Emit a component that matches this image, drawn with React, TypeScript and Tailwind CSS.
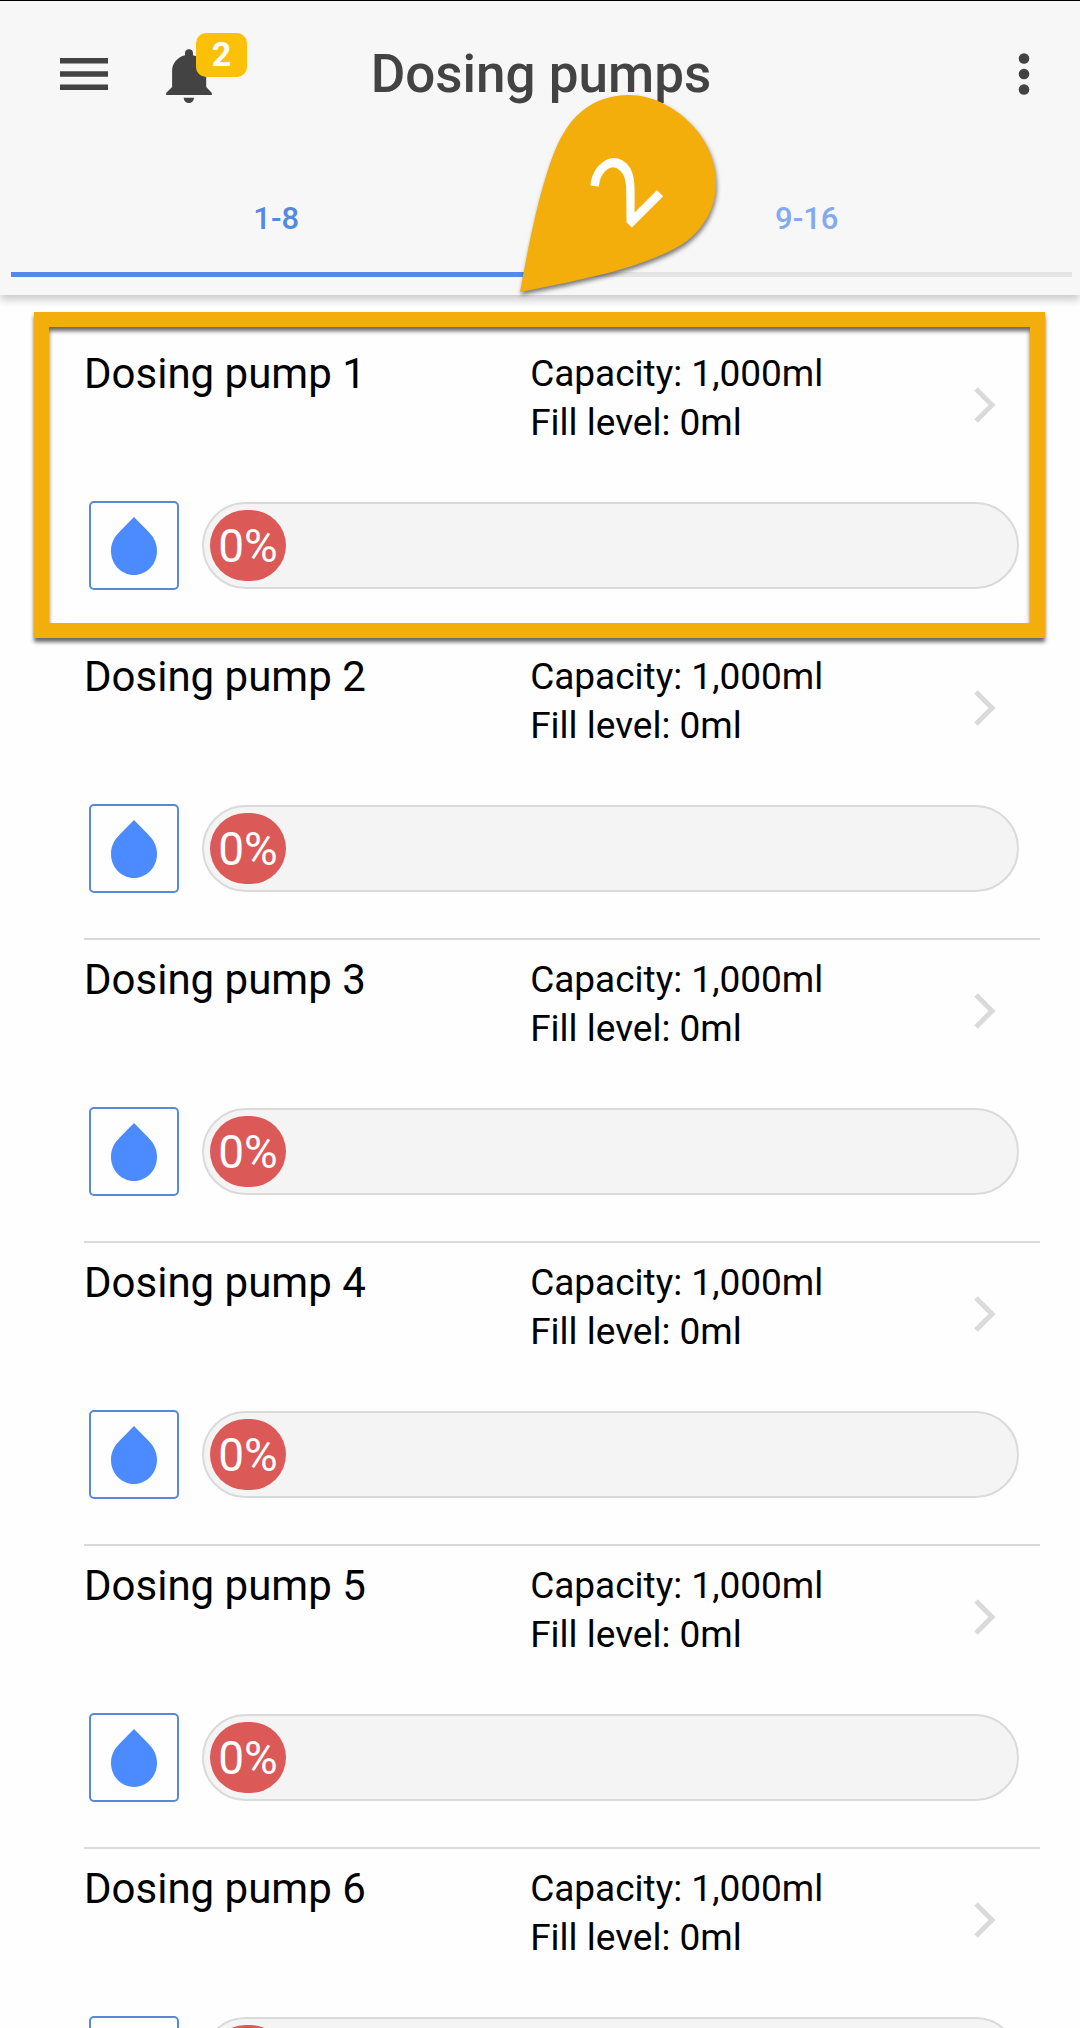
type Pump = {
    id: number;
    capacity: string;
    level: string;
    percent: number;
    highlighted?: boolean;
}

const pumps: Pump[] = [
    { id: 1, capacity: "1,000ml", level: "0ml", percent: 0, highlighted: true },
    { id: 2, capacity: "1,000ml", level: "0ml", percent: 0 },
    { id: 3, capacity: "1,000ml", level: "0ml", percent: 0 },
    { id: 4, capacity: "1,000ml", level: "0ml", percent: 0 },
    { id: 5, capacity: "1,000ml", level: "0ml", percent: 0 },
    { id: 6, capacity: "1,000ml", level: "0ml", percent: 0 },
]

const MenuIcon = () => (
    <svg width="48" height="32" viewBox="0 0 48 32" fill="#434343">
        <path d="M0 0h48v5.5H0zM0 13.2h48v5.5H0zM0 26.4h48v5.5H0z" />
    </svg>
)

const BellIcon = () => (
    <svg width="46" height="54" viewBox="498 146 138 163" fill="#434343">
        <path d="M498 285v-6l18-18v-50c0-22 17-41 39-46v-6a12 12 0 0 1 24 0v6c22 5 40 24 40 46v50l17 18v6z" />
        <path d="M551 293h31a15.5 16 0 0 1-31 0z" />
    </svg>
)

const MoreIcon = () => (
    <svg width="12" height="42" viewBox="0 0 12 42" fill="#434343">
        <circle cx="6" cy="5.5" r="5.3" />
        <circle cx="6" cy="21" r="5.3" />
        <circle cx="6" cy="36.5" r="5.3" />
    </svg>
)

const DropIcon = () => (
    <svg width="46" height="58" viewBox="0 0 138 174" fill="#4c8bff">
        <path d="M69 0l42 43c17 17 27 35 27 59 0 40-31 72-69 72S0 142 0 102c0-24 10-42 27-59z" />
    </svg>
)

const ChevronIcon = () => (
    <svg width="22" height="36" viewBox="0 0 22 36" fill="none" stroke="#dadada" strokeWidth="5">
        <path d="M2 2l16 16L2 34" />
    </svg>
)

// Callout pin that points at the tab bar
const StepPin = () => (
    <svg
        className="pointer-events-none absolute top-[85px] left-1/2 z-20 -ml-[30px] drop-shadow-[1px_3px_2px_rgba(0,0,0,0.5)]"
        width="216"
        height="216"
        viewBox="510 85 216 216"
    >
        <path
            fill="#f3ae0b"
            d="M520 292C529 243 537 204 547 173C556 144 566 124 582 111C596 100 611 95 629 95C652 95 676 107 694 127C709 144 716 163 716 184C716 208 703 230 684 243C668 254 638 265 608 273C580 280 550 286 520 292Z"
        />
        <text
            x="647"
            y="211"
            transform="rotate(-45 647 211)"
            textAnchor="middle"
            fill="#fff"
            stroke="#fff"
            strokeWidth="2"
            className="font-['Open_Sans',sans-serif] text-[90px]"
        >
            2
        </text>
    </svg>
)

const Header = () => {
    return (
        <header className="relative z-10 border-t border-black bg-[#f7f7f7] pb-[18px] shadow-[0_5px_8px_rgba(0,0,0,0.2)]">
            <div className="grid h-[146px] grid-cols-[1fr_auto_1fr] items-center pr-[50px] pl-[52px]">
                <div className="flex items-center gap-[50px]">
                    <button type="button" aria-label="Menu" className="px-2">
                        <MenuIcon />
                    </button>
                    <button type="button" aria-label="Notifications" className="relative pt-1">
                        <BellIcon />
                        <span className="absolute -top-3 left-[30px] h-11 w-[51px] rounded-[10px] bg-[#fbc108] text-center text-[34px] leading-[42px] font-bold text-white">
                            2
                        </span>
                    </button>
                </div>
                <h1 className="text-[53px] leading-[60px] font-medium text-[#434343]">Dosing pumps</h1>
                <button type="button" aria-label="More" className="justify-self-end">
                    <MoreIcon />
                </button>
            </div>
            <nav className="mr-2 ml-[11px] flex text-[31px] leading-10 font-medium">
                <button type="button" className="flex-1 border-b-[5px] border-[#5388ec] pt-[52px] pb-[33px] text-[#5388e4]">
                    1-8
                </button>
                <button type="button" className="flex-1 border-b-[5px] border-[#e4e4e4] pt-[52px] pb-[33px] text-[#83a9f0]">
                    9-16
                </button>
            </nav>
        </header>
    )
}

const PumpItem = ({ pump }: { pump: Pump }) => {
    return (
        <li className="relative border-b-2 border-[#dadada] pt-[15px] pb-[45px]">
            <a href={`#pump-${pump.id}`} className="flex items-start">
                <h2 className="w-7/15 text-[42px] leading-[50px]">Dosing pump {pump.id}</h2>
                <div className="flex-1 text-[37px] leading-[49px]">
                    <p>Capacity: {pump.capacity}</p>
                    <p>Fill level: {pump.level}</p>
                </div>
                <div className="mt-[38px] mr-11">
                    <ChevronIcon />
                </div>
            </a>
            <div className="mt-[54px] mr-[21px] ml-[5px] flex items-center gap-[23px]">
                <button
                    type="button"
                    aria-label="Dose"
                    className="flex h-[89px] w-[90px] items-center justify-center rounded-[5px] border-2 border-[#5789d6]"
                >
                    <DropIcon />
                </button>
                <div className="flex h-[87px] flex-1 items-center rounded-full border-2 border-[#dadada] bg-[#f4f4f4] px-1.5">
                    <div
                        className="flex h-[71px] min-w-[76px] items-center justify-center rounded-full bg-[#db5a57] text-[46px] leading-[54px] text-white"
                        style={{ width: `${pump.percent}%` }}
                    >
                        {pump.percent}%
                    </div>
                </div>
            </div>
            {pump.highlighted && (
                <div className="pointer-events-none absolute -top-[22px] -right-[5px] -bottom-[3px] -left-[50px] border-[15px] border-[#f3ae0b] shadow-[0_4px_4px_rgba(0,0,0,0.6),inset_0_4px_4px_rgba(0,0,0,0.6)]" />
            )}
        </li>
    )
}

const App = () => {
    return (
        <div className="relative flex h-screen flex-col overflow-hidden bg-[#fefefe] font-[Roboto,sans-serif] text-black">
            <Header />
            <StepPin />
            <main className="flex-1 overflow-y-auto pt-[39px] [scrollbar-width:none]">
                <ul className="mr-10 ml-[84px]">
                    {pumps.map((pump) => (
                        <PumpItem key={pump.id} pump={pump} />
                    ))}
                </ul>
            </main>
        </div>
    )
}

export default App
